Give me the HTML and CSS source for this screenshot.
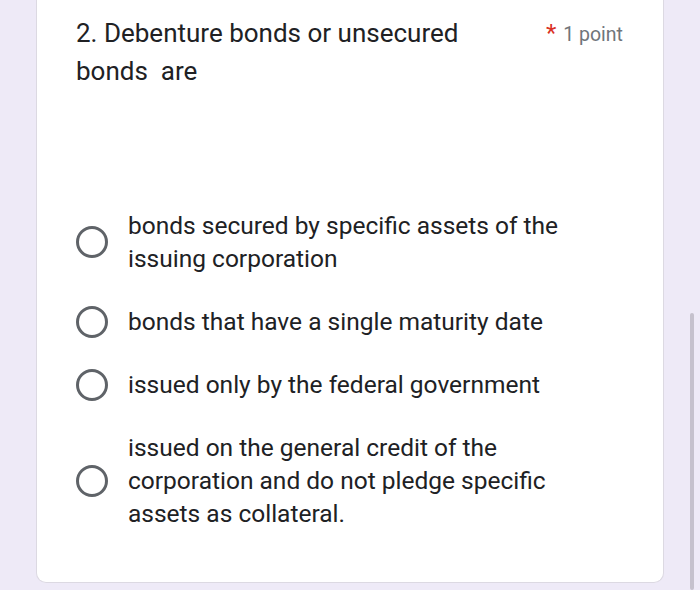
FILE: index.html
```html
<!DOCTYPE html>
<html lang="en">
<head>
  <meta charset="UTF-8" />
  <meta name="viewport" content="width=device-width, initial-scale=1.0"/>
  <title>Question 2</title>
  <link rel="stylesheet" href="styles.css">
</head>
<body>
  <div class="page">
    <div class="question-card">
      <div class="question-head">
        <div class="question-title">2. Debenture bonds or unsecured bonds&nbsp; are</div>
        <div class="question-points"><span class="required">*</span> 1 point</div>
      </div>

      <ul class="options">
        <li class="option">
          <span class="radio"></span>
          <span class="option-text">bonds secured by specific assets of the issuing corporation</span>
        </li>
        <li class="option">
          <span class="radio"></span>
          <span class="option-text">bonds that have a single maturity date</span>
        </li>
        <li class="option">
          <span class="radio"></span>
          <span class="option-text">issued only by the federal government</span>
        </li>
        <li class="option">
          <span class="radio"></span>
          <span class="option-text">issued on the general credit of the corporation and do not pledge specific assets as collateral.</span>
        </li>
      </ul>
    </div>
  </div>
  <div class="scrollbar"></div>
</body>
</html>
```

FILE: styles.css
```css
html, body {
  margin: 0;
  padding: 0;
}

body {
  font-family: Roboto, "Noto Sans", Arial, sans-serif;
  background-color: #eeeaf7;
  color: #202124;
  width: 700px;
  height: 590px;
  overflow: hidden;
}

.page {
  padding-left: 36px;
}

.question-card {
  width: 628px;
  background-color: #fff;
  border: 1px solid #dcd9e2;
  border-top: none;
  border-radius: 0 0 10px 10px;
  padding: 14px 40px 52px 39px;
  box-sizing: border-box;
  height: 583px;
}

.question-head {
  display: flex;
  align-items: flex-start;
  justify-content: space-between;
}

.question-title {
  font-size: 26px;
  line-height: 38px;
  width: 420px;
}

.question-points {
  font-size: 19.5px;
  line-height: 38px;
  color: #70757a;
}

.required {
  color: #d93025;
  font-size: 24px;
  margin-right: 2px;
}

.options {
  list-style: none;
  margin: 104px 0 0;
  padding: 0;
}

.option {
  display: flex;
  align-items: center;
  gap: 20px;
  padding: 15px 0;
}

.radio {
  width: 26px;
  height: 26px;
  border: 3px solid #5f6368;
  border-radius: 50%;
  flex-shrink: 0;
}

.option-text {
  font-size: 24.5px;
  line-height: 33px;
  max-width: 460px;
}

.scrollbar {
  position: absolute;
  left: 690px;
  top: 313px;
  width: 4px;
  height: 277px;
  background-color: #c5c1cd;
  border-radius: 2px;
}
```
